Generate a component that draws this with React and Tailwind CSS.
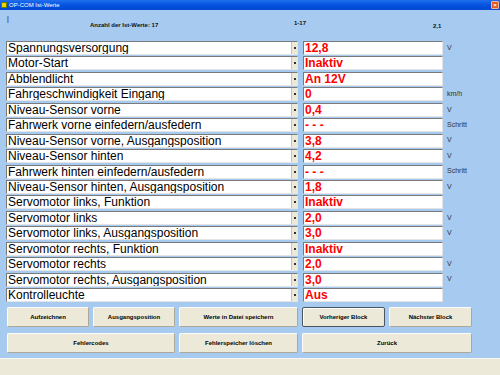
const ROWS = [
  { label: "Spannungsversorgung", value: "12,8", unit: "V" },
  { label: "Motor-Start", value: "Inaktiv", unit: "" },
  { label: "Abblendlicht", value: "An 12V", unit: "" },
  { label: "Fahrgeschwindigkeit Eingang", value: "0", unit: "km/h" },
  { label: "Niveau-Sensor vorne", value: "0,4", unit: "V" },
  { label: "Fahrwerk vorne einfedern/ausfedern", value: "- - -", unit: "Schritt" },
  { label: "Niveau-Sensor vorne, Ausgangsposition", value: "3,8", unit: "V" },
  { label: "Niveau-Sensor hinten", value: "4,2", unit: "V" },
  { label: "Fahrwerk hinten einfedern/ausfedern", value: "- - -", unit: "Schritt" },
  { label: "Niveau-Sensor hinten, Ausgangsposition", value: "1,8", unit: "V" },
  { label: "Servomotor links, Funktion", value: "Inaktiv", unit: "" },
  { label: "Servomotor links", value: "2,0", unit: "V" },
  { label: "Servomotor links, Ausgangsposition", value: "3,0", unit: "V" },
  { label: "Servomotor rechts, Funktion", value: "Inaktiv", unit: "" },
  { label: "Servomotor rechts", value: "2,0", unit: "V" },
  { label: "Servomotor rechts, Ausgangsposition", value: "3,0", unit: "V" },
  { label: "Kontrolleuchte", value: "Aus", unit: "" },
];

const field =
  "h-[14px] bg-white border border-t-[#7a7a7a] border-l-[#7a7a7a] border-b-[#e4e4e4] border-r-[#e4e4e4]";

function Button({ children, width, focused }) {
  return (
    <button
      className={`h-[20px] ${width} shrink-0 rounded-[2px] bg-[#ece9d8] text-[6px] font-bold text-black ${
        focused
          ? "border border-[#4a5560] shadow-[inset_1px_1px_0_#fff]"
          : "border border-t-[#fdfdfb] border-l-[#fdfdfb] border-b-[#aca899] border-r-[#aca899]"
      }`}
    >
      {children}
    </button>
  );
}

export default function App() {
  return (
    <div className="w-[500px] h-[375px] overflow-hidden flex flex-col bg-[#a6caf0] font-['Liberation_Sans',Arial,sans-serif]">
      <div className="h-[10px] shrink-0 flex items-center bg-gradient-to-b from-[#1f6ff0] via-[#0552e0] to-[#0348d0] pl-[1px] pr-[1px]">
        <div className="w-[6px] h-[6px] bg-[#e8d800] border border-[#6a7a00]" />
        <span className="ml-[2px] text-[6px] leading-none text-white">OP-COM Ist-Werte</span>
        <div className="ml-auto w-[8px] h-[8px] rounded-[1px] bg-[#e2582a] border border-[#f3b79e] flex items-center justify-center text-[6px] leading-none font-bold text-white">
          ×
        </div>
      </div>

      <div className="h-[31px] shrink-0 grid grid-cols-[90px_204px_139px_1fr] text-[6px] font-bold text-[#111]">
        <div className="pl-[7px] pt-[5px] text-[7px] font-normal leading-none">|</div>
        <div className="pt-[12px] leading-none">Anzahl der Ist-Werte: 17</div>
        <div className="pt-[10px] leading-none">1-17</div>
        <div className="pt-[13px] leading-none">2,1</div>
      </div>

      <div className="flex flex-col gap-[1.44px]">
        {ROWS.map((r) => (
          <div key={r.label} className="flex items-center h-[14px]">
            <div className={`${field} ml-[6px] w-[292px] flex items-center`}>
              <span className="flex-1 pl-[1px] text-[12px] leading-[12px] text-black whitespace-nowrap overflow-hidden">
                {r.label}
              </span>
              <div className="w-[6px] h-[12px] bg-[#ece9d8] border-l border-[#c8c4b4] flex items-center justify-center">
                <div className="w-[2px] h-[2px] bg-[#333]" />
              </div>
            </div>
            <div className={`${field} ml-[5px] w-[140px] flex items-center`}>
              <span className="pl-[1px] text-[12px] leading-[12px] font-bold text-[#ff0000]">{r.value}</span>
            </div>
            <span className="ml-[4px] text-[7px] text-[#333]">{r.unit}</span>
          </div>
        ))}
      </div>

      <div className="mt-[5px] flex gap-[4px] pl-[7px]">
        <Button width="w-[82px]">Aufzeichnen</Button>
        <Button width="w-[82px]">Ausgangsposition</Button>
        <Button width="w-[119px]">Werte in Datei speichern</Button>
        <Button width="w-[83px]" focused>
          Vorheriger Block
        </Button>
        <Button width="w-[83px]">Nächster Block</Button>
      </div>
      <div className="mt-[6px] flex gap-[4px] pl-[7px]">
        <Button width="w-[168px]">Fehlercodes</Button>
        <Button width="w-[119px]">Fehlerspeicher löschen</Button>
        <Button width="w-[170px]">Zurück</Button>
      </div>

      <div className="mt-auto h-[17px] bg-[#ece9d8] border-t border-[#f7f6f0]" />
    </div>
  );
}
